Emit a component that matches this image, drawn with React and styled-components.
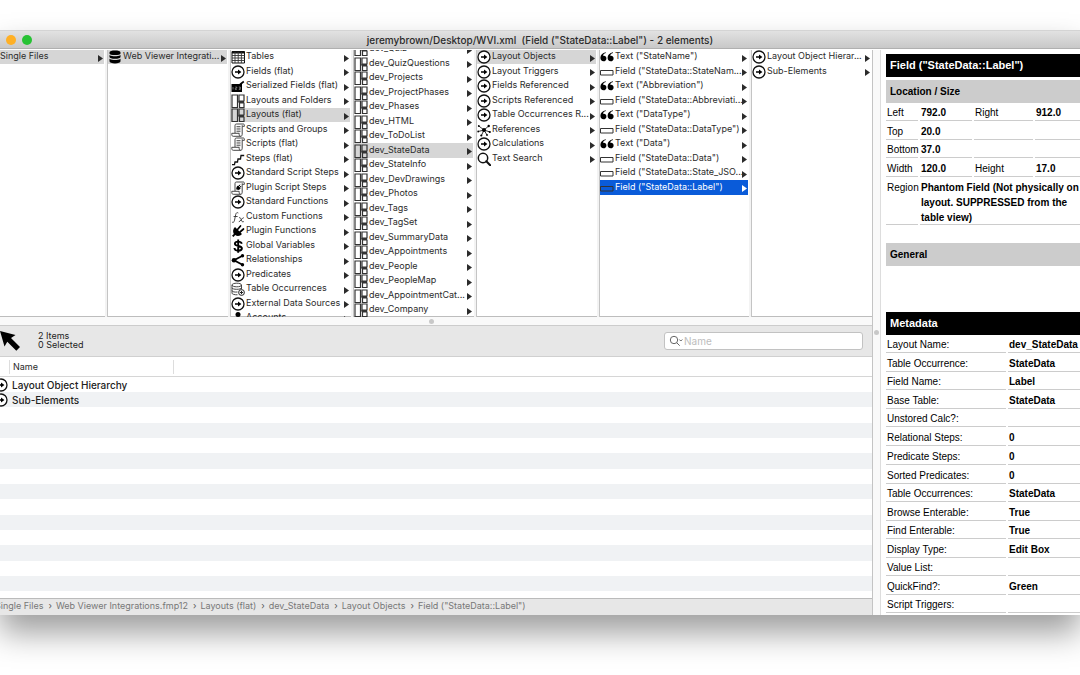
import React from 'react';
import styled, { createGlobalStyle, css } from 'styled-components';

const GlobalStyle = createGlobalStyle`
  * {
    box-sizing: border-box;
  }

  body {
    margin: 0;
    background: #fff;
    color: #2b2b2b;
    font-family: Inter, "Liberation Sans", sans-serif;
    font-size: 9px;
    overflow: hidden;
  }

  button, input {
    font: inherit;
    color: inherit;
  }
`;

const icons = {
  arrow: (
    <>
      <circle cx="7" cy="7" r="6" fill="#fff" stroke="#111" strokeWidth="1.3" />
      <path d="M4 6.3h3V4.4L10.4 7 7 9.6V7.7H4z" fill="#000" />
    </>
  ),
  database: (
    <path
      d="M1.500 2.400C1.500 1.200 4 .6 7 .6s5.500.6 5.500 1.800v1C12.500 4.400 10 5 7 5S1.500 4.400 1.500 3.400zM1.500 4.900C3 6 5 6.200 7 6.200s4-.2 5.500-1.300v2C12.500 8 10 8.800 7 8.800S1.500 8 1.500 6.900zM1.500 8.700C3 9.800 5 10 7 10s4-.2 5.500-1.300v2.600c0 1.300-2.500 2.200-5.500 2.200s-5.500-.9-5.500-2.200z"
      fill="#000"
    />
  ),
  table: (
    <>
      <path d="M1 1.500h12.500v11.500H1z" fill="#fff" stroke="#111" />
      <path d="M1 2.500h12.500" stroke="#111" strokeWidth="2" />
      <path d="M1 5.500h12.500M1 8h12.500M1 10.500h12.500M4 2v11M7.200 2v11M10.400 2v11" stroke="#333" strokeWidth=".9" />
    </>
  ),
  serial: (
    <>
      <path d="M.5 5h10.500v8H.5z" fill="#000" />
      <path d="M9 5.500l3.800-3" stroke="#000" strokeWidth="1.600" />
      <path d="M2 8v2.500M4.300 8h1.500v1.200H4.300v1.300h1.500M7.800 8h1.500v2.500H7.800M8 9.200h1.300" stroke="#ccc" strokeWidth=".5" fill="none" />
    </>
  ),
  layout: (
    <path d="M1 1h5.500v12.500H1zM8 1h5v6H8zM8.500 9h4.500v4.500H8.500zM6.500 8H13" fill="none" stroke="#333" strokeWidth="1.200" />
  ),
  script: (
    <>
      <path
        d="M4 10V2.600C4 1.500 4.600 1 5.500 1h6.700c.9 0 1.200.6 1.200 1.300v1h-2.200V2.300M11.200 3.300v8c0 1.300-.6 2-1.500 2H2.300c-.9 0-1.500-.7-1.500-1.600V10.300h7.400v1.300c0 1 .6 1.700 1.500 1.700"
        fill="none"
        stroke="#333"
        strokeWidth=".9"
      />
      <path d="M5.500 3.500h4M5.500 5.200h4M5.500 6.900h4M5.500 8.600h4" stroke="#444" strokeWidth=".8" />
    </>
  ),
  pluginScript: (
    <>
      <path
        d="M4 10V2.600C4 1.500 4.600 1 5.500 1h6.700c.9 0 1.200.6 1.200 1.300v1h-2.200V2.300M11.200 3.300v8c0 1.300-.6 2-1.500 2H2.300c-.9 0-1.500-.7-1.500-1.600V10.300h7.400v1.300c0 1 .6 1.700 1.500 1.700"
        fill="none"
        stroke="#333"
        strokeWidth=".9"
      />
      <path d="M5.300 8.600c-.3-2 .6-3.500 2-4.100l2.300 2.800C8.900 8.700 7.200 9.500 6 8.600z" fill="#000" />
      <path d="M8 5.200l1-1.500M9 6.500l1-1.500" stroke="#000" />
    </>
  ),
  steps: <path d="M1 12.700h2.500l.5-2.700h2.500l.5-3h2.500l.5-3.500h3.200" fill="none" stroke="#111" strokeWidth="1.300" />,
  fx: (
    <path
      d="M7.300 3c-1.300-.8-2.200-.2-2.600 1.600l-1.300 6.200c-.3 1.400-1.300 1.900-2.400 1.300M2.600 6.500h4M8 7.800c1.300-.5 1.800.3 2.300 2s1 2.500 2.500 1.800M12.800 7.700c-1.500-.3-3.500 4.200-5 4"
      fill="none"
      stroke="#333"
      strokeWidth=".9"
    />
  ),
  plug: (
    <>
      <path d="M4 3l7 7c-1.600 2.100-4.800 2.600-6.800 1l-1.700 2L1 11.700l1.800-1.800C1.500 7.500 2 4.900 4 3z" fill="#000" />
      <path d="M6.500 5.500l3-3.500M9 8l3.500-3" stroke="#000" strokeWidth="1.700" strokeLinecap="round" />
    </>
  ),
  dollar: (
    <path
      d="M10.800 4.700C10.300 3.200 8.900 2.600 7.300 2.600c-2 0-3.400.8-3.400 2.200 0 3 7 1.300 7 4.500 0 1.600-1.600 2.400-3.600 2.400-2.100 0-3.700-.9-3.900-2.700M7.200.5v13.300"
      fill="none"
      stroke="#000"
      strokeWidth="1.900"
    />
  ),
  share: (
    <>
      <path d="M11.500 2.800L3 7.200l8.500 4.500" fill="none" stroke="#000" strokeWidth="1.800" />
      <circle cx="11.500" cy="2.800" r="1.700" />
      <circle cx="3" cy="7.200" r="2.300" />
      <circle cx="11.500" cy="11.700" r="1.700" />
    </>
  ),
  occurrence: (
    <>
      <path
        d="M1 3c0-2.400 9.500-2.400 9.500 0S1 5.400 1 3v8.200c0 1 2.500 1.700 5.500 1.600M10.500 3v4M1 5.800c0 2 9.500 2 9.500 0M1 8.500c0 1.400 3 1.800 5.500 1.500"
        fill="none"
        stroke="#333"
        strokeWidth=".9"
      />
      <circle cx="10.500" cy="10.500" r="2.900" fill="#fff" stroke="#222" />
      <path d="M8.800 10.500h3.400M10.500 8.800v3.400" stroke="#222" />
    </>
  ),
  person: (
    <>
      <circle cx="7" cy="3.500" r="2.500" />
      <path d="M2 14c0-4 2-6.500 5-6.500s5 2.500 5 6.500z" />
    </>
  ),
  network: (
    <>
      <path d="M7 7L1.800 3M7 7l4.700-4M7 7L1.200 8.500M7 7l6 2M7 7l-2.600 5.500M7 7l3 5" stroke="#000" strokeWidth=".8" />
      <circle cx="7" cy="7" r="2" />
      <circle cx="1.800" cy="3" r=".9" />
      <circle cx="11.700" cy="3" r="1.200" />
      <circle cx="1.200" cy="8.500" r=".9" />
      <circle cx="12.800" cy="9" r="1.100" />
      <circle cx="4.300" cy="12.500" r="1.100" />
      <circle cx="10" cy="12" r=".9" />
    </>
  ),
  search: (
    <>
      <circle cx="6" cy="6" r="4.700" fill="none" stroke="#111" strokeWidth="1.500" />
      <path d="M9.300 9.300l3.900 3.900" stroke="#111" strokeWidth="2" strokeLinecap="round" />
    </>
  ),
  quote: (
    <path
      d="M5.800 3C3.900 3.400 3.100 4.600 3.100 5.900c1.800-.4 3.300.6 3.300 2.500 0 1.700-1.200 2.900-2.900 2.900C1.600 11.300.4 9.900.4 7.800.4 5 2.400 2.700 5.800 2.200zM13 3c-1.900.4-2.700 1.600-2.700 2.900 1.800-.4 3.300.6 3.300 2.500 0 1.700-1.200 2.900-2.900 2.900-1.900 0-3.100-1.400-3.100-3.500C7.600 5 9.600 2.700 13 2.200z"
      fill="#000"
    />
  ),
  field: <path d="M.5 5.500h12.500v4.500H.5z" fill="none" stroke="#333" />,
};

const Icon = ({ name }) => (
  <IconSvg viewBox="0 0 14 14" aria-hidden="true">
    {icons[name]}
  </IconSvg>
);

const files = [{ label: 'Single Files', selected: true }];

const databases = [{ icon: 'database', label: 'Web Viewer Integrati...', selected: true }];

const categories = [
  { icon: 'table', label: 'Tables' },
  { icon: 'arrow', label: 'Fields (flat)' },
  { icon: 'serial', label: 'Serialized Fields (flat)' },
  { icon: 'layout', label: 'Layouts and Folders' },
  { icon: 'layout', label: 'Layouts (flat)', selected: true },
  { icon: 'script', label: 'Scripts and Groups' },
  { icon: 'script', label: 'Scripts (flat)' },
  { icon: 'steps', label: 'Steps (flat)' },
  { icon: 'arrow', label: 'Standard Script Steps' },
  { icon: 'pluginScript', label: 'Plugin Script Steps' },
  { icon: 'arrow', label: 'Standard Functions' },
  { icon: 'fx', label: 'Custom Functions' },
  { icon: 'plug', label: 'Plugin Functions' },
  { icon: 'dollar', label: 'Global Variables' },
  { icon: 'share', label: 'Relationships' },
  { icon: 'arrow', label: 'Predicates' },
  { icon: 'occurrence', label: 'Table Occurrences' },
  { icon: 'arrow', label: 'External Data Sources' },
  { icon: 'person', label: 'Accounts' },
];

const layouts = [
  'dev_Quiz',
  'dev_QuizQuestions',
  'dev_Projects',
  'dev_ProjectPhases',
  'dev_Phases',
  'dev_HTML',
  'dev_ToDoList',
  'dev_StateData',
  'dev_StateInfo',
  'dev_DevDrawings',
  'dev_Photos',
  'dev_Tags',
  'dev_TagSet',
  'dev_SummaryData',
  'dev_Appointments',
  'dev_People',
  'dev_PeopleMap',
  'dev_AppointmentCat...',
  'dev_Company',
].map((label) => ({ icon: 'layout', label, selected: label === 'dev_StateData' }));

const layoutParts = [
  { icon: 'arrow', label: 'Layout Objects', selected: true },
  { icon: 'arrow', label: 'Layout Triggers' },
  { icon: 'arrow', label: 'Fields Referenced' },
  { icon: 'arrow', label: 'Scripts Referenced' },
  { icon: 'arrow', label: 'Table Occurrences R...' },
  { icon: 'network', label: 'References' },
  { icon: 'arrow', label: 'Calculations' },
  { icon: 'search', label: 'Text Search' },
];

const objects = [
  { icon: 'quote', label: 'Text ("StateName")' },
  { icon: 'field', label: 'Field ("StateData::StateNam...' },
  { icon: 'quote', label: 'Text ("Abbreviation")' },
  { icon: 'field', label: 'Field ("StateData::Abbreviati...' },
  { icon: 'quote', label: 'Text ("DataType")' },
  { icon: 'field', label: 'Field ("StateData::DataType")' },
  { icon: 'quote', label: 'Text ("Data")' },
  { icon: 'field', label: 'Field ("StateData::Data")' },
  { icon: 'field', label: 'Field ("StateData::State_JSO...' },
  { icon: 'field', label: 'Field ("StateData::Label")', active: true },
];

const elements = [
  { icon: 'arrow', label: 'Layout Object Hierar...' },
  { icon: 'arrow', label: 'Sub-Elements' },
];

const columns = [
  { name: 'Files', items: files },
  { name: 'Databases', items: databases },
  { name: 'Categories', items: categories },
  { name: 'Layouts', items: layouts, scrolled: true },
  { name: 'Layout parts', items: layoutParts },
  { name: 'Objects', items: objects },
  { name: 'Elements', items: elements },
];

const results = ['Layout Object Hierarchy', 'Sub-Elements'];

const path = [
  'Single Files',
  'Web Viewer Integrations.fmp12',
  'Layouts (flat)',
  'dev_StateData',
  'Layout Objects',
  'Field ("StateData::Label")',
];

const location = [
  ['Left', '792.0', 'Right', '912.0'],
  ['Top', '20.0', '', ''],
  ['Bottom', '37.0', '', ''],
  ['Width', '120.0', 'Height', '17.0'],
];

const metadata = [
  ['Layout Name:', 'dev_StateData'],
  ['Table Occurrence:', 'StateData'],
  ['Field Name:', 'Label'],
  ['Base Table:', 'StateData'],
  ['Unstored Calc?:', ''],
  ['Relational Steps:', '0'],
  ['Predicate Steps:', '0'],
  ['Sorted Predicates:', '0'],
  ['Table Occurrences:', 'StateData'],
  ['Browse Enterable:', 'True'],
  ['Find Enterable:', 'True'],
  ['Display Type:', 'Edit Box'],
  ['Value List:', ''],
  ['QuickFind?:', 'Green'],
  ['Script Triggers:', ''],
];

const BrowserColumn = ({ name, items, scrolled }) => (
  <Column aria-label={name} $scrolled={scrolled}>
    {items.map((item) => (
      <Item key={item.label}>
        <ItemButton type="button" $selected={item.selected} $active={item.active}>
          {item.icon && <Icon name={item.icon} />}
          <ItemLabel>{item.label}</ItemLabel>
          <Disclosure viewBox="0 0 5 7" aria-hidden="true">
            <path d="M0 0l5 3.500-5 3.500z" fill="currentColor" />
          </Disclosure>
        </ItemButton>
      </Item>
    ))}
  </Column>
);

const App = () => {
  return (
    <Desktop>
      <GlobalStyle />
      <Window>
        <TitleBar>
          <Light type="button" aria-label="Minimise" $color="#ffb025" />
          <Light type="button" aria-label="Zoom" $color="#27c234" />
          <Title>{'jeremybrown/Desktop/WVI.xml  (Field ("StateData::Label") - 2 elements)'}</Title>
        </TitleBar>
        <Content>
          <Main>
            <Browser>
              {columns.map((column) => (
                <BrowserColumn key={column.name} {...column} />
              ))}
            </Browser>
            <RowSplitter>
              <Grip />
            </RowSplitter>
            <Toolbar>
              <Pointer viewBox="0 0 20 20" aria-hidden="true">
                <path d="M0 0l15.500 4-4.500 3 9 9-3.700 3.700-9-9L4.500 15.500z" fill="#000" />
              </Pointer>
              <Counts>
                <div>2 Items</div>
                <div>0 Selected</div>
              </Counts>
              <SearchBox>
                <SearchIcon viewBox="0 0 14 12" aria-hidden="true">
                  <circle cx="5" cy="5" r="3.700" />
                  <path d="M7.700 7.700l3 3M10.300 4.500l1.500 1.500 1.500-1.500" />
                </SearchIcon>
                <SearchInput type="text" aria-label="Name" placeholder="Name" />
              </SearchBox>
            </Toolbar>
            <Results>
              <ResultHead>
                <tr>
                  <NameHeader scope="col">Name</NameHeader>
                  <th aria-label="Value" />
                </tr>
              </ResultHead>
              <ResultBody>
                {Array.from({ length: 14 }, (_, i) => (
                  <tr key={i}>
                    <td colSpan={2}>
                      {results[i] && (
                        <ResultName>
                          <Icon name="arrow" />
                          {results[i]}
                        </ResultName>
                      )}
                    </td>
                  </tr>
                ))}
              </ResultBody>
            </Results>
            <PathBar aria-label="Path">
              {path.map((step) => (
                <PathLink key={step} href="#">
                  {step}
                </PathLink>
              ))}
            </PathBar>
          </Main>
          <ColumnSplitter>
            <Grip />
          </ColumnSplitter>
          <Inspector>
            <DarkHeading>Field ("StateData::Label")</DarkHeading>
            <GreyHeading>Location / Size</GreyHeading>
            <Details>
              <colgroup>
                <Col $width="32px" />
                <Col $width="52px" />
                <Col $width="59px" />
                <Col />
              </colgroup>
              <tbody>
                {location.map(([a, b, c, d]) => (
                  <DetailRow key={a}>
                    <th scope="row">{a}</th>
                    <td>{b}</td>
                    <th>{c}</th>
                    <td>{d}</td>
                  </DetailRow>
                ))}
                <NoteRow>
                  <th scope="row">Region</th>
                  <td colSpan={3}>Phantom Field (Not physically on layout. SUPPRESSED from the table view)</td>
                </NoteRow>
              </tbody>
            </Details>
            <GeneralHeading>General</GeneralHeading>
            <DarkHeading>Metadata</DarkHeading>
            <Details>
              <colgroup>
                <Col $width="120px" />
                <Col />
              </colgroup>
              <tbody>
                {metadata.map(([label, value]) => (
                  <DetailRow key={label}>
                    <th scope="row">{label}</th>
                    <td>{value}</td>
                  </DetailRow>
                ))}
              </tbody>
            </Details>
          </Inspector>
        </Content>
      </Window>
    </Desktop>
  );
};

const Desktop = styled.div`
  display: flex;
  height: 100vh;
  padding: 30px 0 60px;
`;

const Window = styled.div`
  flex: 1;
  min-width: 0;
  display: flex;
  flex-direction: column;
  background: #fff;
  box-shadow: 0 18px 30px rgba(0, 0, 0, 0.38);
`;

const TitleBar = styled.header`
  display: flex;
  align-items: center;
  gap: 6px;
  height: 19px;
  padding: 0 6px;
  background: linear-gradient(#e2e2e2, #c8c8c8);
  border-top: 1px solid #d4d4d4;
  border-bottom: 1px solid #b0b0b0;
`;

const Light = styled.button`
  width: 10px;
  height: 10px;
  padding: 0;
  border: 0;
  border-radius: 50%;
  background: ${(props) => props.$color};
`;

const Title = styled.h1`
  flex: 1;
  margin: 0 32px 0 0;
  font-size: 10px;
  font-weight: 500;
  line-height: 16px;
  text-align: center;
  white-space: pre;
`;

const Content = styled.div`
  flex: 1;
  min-height: 0;
  display: flex;
  padding-top: 1px;
`;

const Main = styled.main`
  flex: 1;
  min-width: 0;
  display: flex;
  flex-direction: column;
`;

const Browser = styled.div`
  display: grid;
  grid-template-columns: 105fr 121fr 121fr 121fr 121fr 150fr 121fr;
  gap: 2px;
  height: 267px;
  background: #f3f3f3;
`;

const Column = styled.ul`
  display: flex;
  flex-direction: column;
  justify-content: ${(props) => (props.$scrolled ? 'flex-end' : 'flex-start')};
  min-width: 0;
  margin: 0;
  padding: 0 1px 0 0;
  list-style: none;
  overflow: hidden;
  background: #fff;
  box-shadow: inset 0 -1px #bdbdbd;

  & + & {
    border-left: 1px solid #c4c4c4;
  }
`;

const Item = styled.li`
  flex: none;
  height: 14px;

  &:nth-child(even) {
    height: 15px;
  }
`;

const ItemButton = styled.button`
  display: flex;
  align-items: center;
  gap: 1px;
  width: 100%;
  height: 100%;
  padding: 0 1px 0 0;
  border: 0;
  background: ${(props) => (props.$selected ? '#d6d6d6' : 'transparent')};
  text-align: left;

  ${(props) =>
    props.$active &&
    css`
      background: #0a5bd9;
      color: #fff;
    `}
`;

const IconSvg = styled.svg`
  flex: none;
  width: 14px;
  height: 14px;
`;

const ItemLabel = styled.span`
  flex: 1;
  min-width: 0;
  line-height: 12px;
  padding-bottom: 2px;
  white-space: nowrap;
`;

const Disclosure = styled.svg`
  flex: none;
  width: 5px;
  height: 7px;
  margin-top: 2px;
`;

const RowSplitter = styled.div`
  display: flex;
  align-items: center;
  justify-content: center;
  height: 9px;
  margin-left: -9px;
  background: #f9f9f9;
  border-bottom: 1px solid #ccc;
`;

const ColumnSplitter = styled.div`
  display: flex;
  align-items: center;
  justify-content: center;
  width: 9px;
  background: #f9f9f9;
  border-left: 1px solid #c4c4c4;
  border-right: 1px solid #ddd;
`;

const Grip = styled.span`
  width: 5px;
  height: 5px;
  border-radius: 50%;
  background: #c8c8c8;
`;

const Toolbar = styled.div`
  display: flex;
  align-items: center;
  height: 31px;
  padding-right: 9px;
  background: #e7e7e7;
  border-bottom: 1px solid #d0d0d0;
`;

const Pointer = styled.svg`
  width: 20px;
  height: 20px;
`;

const Counts = styled.div`
  flex: 1;
  padding: 0 0 2px 18px;
  line-height: 9px;
  color: #222;
`;

const SearchBox = styled.label`
  display: flex;
  align-items: center;
  gap: 1px;
  width: 199px;
  height: 18px;
  padding: 0 4px;
  background: #fff;
  border: 1px solid #c2c2c2;
  border-radius: 3px;
`;

const SearchIcon = styled.svg`
  flex: none;
  width: 14px;
  height: 12px;
  fill: none;
  stroke: #666;
`;

const SearchInput = styled.input`
  flex: 1;
  min-width: 0;
  padding: 0;
  border: 0;
  outline: 0;
  font-size: 10px;
  background: transparent;

  &::placeholder {
    color: #bdbdbd;
  }
`;

const Results = styled.table`
  width: 100%;
  border-collapse: separate;
  border-spacing: 0;
  table-layout: fixed;

  th, td {
    padding: 0;
    text-align: left;
    font-weight: 400;
  }
`;

const ResultHead = styled.thead`
  th {
    height: 20px;
    border-bottom: 1px solid #d6d6d6;
  }
`;

const NameHeader = styled.th`
  width: 174px;
  background:
    linear-gradient(#ddd, #ddd) 9px 3px / 1px 14px no-repeat,
    linear-gradient(#ddd, #ddd) 173px 3px / 1px 14px no-repeat;

  && {
    padding-left: 13px;
  }
`;

const ResultBody = styled.tbody`
  font-size: 10px;
  color: #222;

  tr {
    height: 15px;
  }

  tr:nth-child(3n) {
    height: 16px;
  }

  tr:nth-child(even) {
    background: #f0f2f4;
  }
`;

const ResultName = styled.div`
  display: flex;
  align-items: center;
  gap: 4px;
  height: 15px;
  margin-left: -6px;
  font-weight: 500;
`;

const PathBar = styled.nav`
  display: flex;
  align-items: center;
  height: 17px;
  margin-top: auto;
  margin-left: -5px;
  padding-bottom: 2px;
  background: #e7e7e7;
  border-top: 1px solid #bbb;
`;

const PathLink = styled.a`
  line-height: 14px;
  color: #777;
  text-decoration: none;
  white-space: nowrap;

  & + &::before {
    content: "›";
    padding: 0 4px 0 5px;
    color: #555;
  }
`;

const Inspector = styled.aside`
  width: 199px;
  padding: 4px 0 0 5px;
  overflow: hidden;
  font-family: "Liberation Sans", Arial, sans-serif;
  font-size: 10px;
  color: #000;
`;

const DarkHeading = styled.h2`
  margin: 0;
  padding: 0 4px;
  background: #000;
  color: #fff;
  font-size: 11px;
  line-height: 23px;
`;

const GreyHeading = styled.h3`
  margin: 3px 0 0;
  padding: 0 4px;
  background: #ccc;
  font-size: 10px;
  line-height: 23px;
`;

const GeneralHeading = styled(GreyHeading)`
  margin: 18px 0 46px;
`;

const Details = styled.table`
  width: 100%;
  table-layout: fixed;
  border-spacing: 0;

  th, td {
    padding: 1px 1px 0;
    text-align: left;
    vertical-align: middle;
    background: linear-gradient(#ccc, #ccc) 0 100% / calc(100% - 2px) 1px no-repeat;
  }

  td:last-child {
    background-size: 100% 1px;
  }

  th {
    font-weight: 400;
    white-space: nowrap;
  }

  td {
    font-weight: 700;
  }
`;

const Col = styled.col`
  width: ${(props) => (props.$width ? `calc(${props.$width} + 2px)` : 'auto')};
`;

const DetailRow = styled.tr`
  height: 18px;

  &:nth-child(even), &:nth-child(7) {
    height: 19px;
  }
`;

const NoteRow = styled.tr`
  && th, && td {
    padding-top: 3px;
    line-height: 15px;
    vertical-align: top;
  }
`;

export default App;
